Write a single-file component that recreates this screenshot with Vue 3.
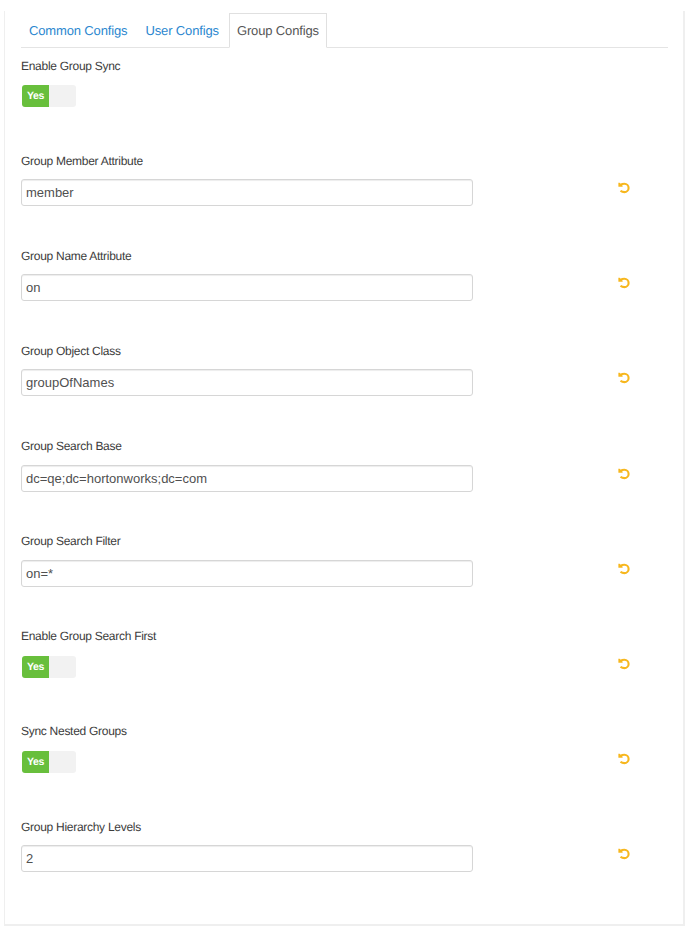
<script setup>
import { ref } from 'vue'

const tabs = ['Common Configs', 'User Configs', 'Group Configs']
const active = ref('Group Configs')

const fields = ref([
  { label: 'Enable Group Sync', type: 'toggle', undo: false },
  { label: 'Group Member Attribute', type: 'text', value: 'member', undo: true },
  { label: 'Group Name Attribute', type: 'text', value: 'on', undo: true },
  { label: 'Group Object Class', type: 'text', value: 'groupOfNames', undo: true },
  { label: 'Group Search Base', type: 'text', value: 'dc=qe;dc=hortonworks;dc=com', undo: true },
  { label: 'Group Search Filter', type: 'text', value: 'on=*', undo: true },
  { label: 'Enable Group Search First', type: 'toggle', undo: true },
  { label: 'Sync Nested Groups', type: 'toggle', undo: true },
  { label: 'Group Hierarchy Levels', type: 'text', value: '2', undo: true },
])
</script>

<template>
  <main class="page">
    <section class="panel">
      <nav class="tabs">
        <a v-for="t in tabs" :key="t" class="tab" :class="{ active: t === active }" @click="active = t">{{ t }}</a>
      </nav>
      <div v-for="f in fields" :key="f.label" class="field">
        <label class="label">{{ f.label }}</label>
        <div class="row">
          <input v-if="f.type === 'text'" v-model="f.value" class="input" type="text" />
          <div v-else class="toggle"><span class="on">Yes</span><span class="off"></span></div>
          <svg v-if="f.undo" class="undo" viewBox="0 0 12 12">
            <path class="arc" d="M2.6 2.9Q4.2 1.7 6.4 1.7A4.2 4.2 0 0 1 6.4 10.1Q4.200 10.100 2.500 8.700" />
            <path class="head" d="M0.4 0.8H1.6L4.6 3.8V4.8H0.4z" />
          </svg>
        </div>
      </div>
    </section>
  </main>
</template>

<style>
body {
  background: #fff;
}
</style>

<style scoped>
.page {
  box-sizing: border-box;
  width: 691px;
  height: 931px;
  padding: 11px 6px 0 4px;
  font-family: "Liberation Sans", Arial, sans-serif;
  text-rendering: geometricPrecision;
}
.panel {
  box-sizing: border-box;
  height: 915px;
  padding: 2px 15px 0 16px;
  border: 1px solid #efefef;
  border-width: 0 2px 2px 1px;
}
.tabs {
  display: flex;
  height: 34px;
  border-bottom: 1px solid #e4e4e4;
}
.tab {
  box-sizing: border-box;
  height: 35px;
  margin-right: 2px;
  padding: 0 7px;
  border: 1px solid transparent;
  font-size: 13px;
  line-height: 34px;
  letter-spacing: -0.14px;
  color: #2b87cf;
  white-space: nowrap;
}
.tab.active {
  border-color: #e0e0e0 #e0e0e0 #fff;
  background: #fff;
  color: #555;
}
.field {
  height: 95.15px;
}
.label {
  display: block;
  box-sizing: border-box;
  padding-top: 9.5px;
  height: 36px;
  font-size: 12px;
  line-height: 17px;
  letter-spacing: -0.28px;
  color: #3c3c3c;
}
.row {
  display: flex;
  width: 609px;
  justify-content: space-between;
}
.input {
  box-sizing: border-box;
  width: 452px;
  height: 27px;
  padding: 0 4px;
  border: 1px solid #d6d6d6;
  border-radius: 3px;
  box-shadow: inset 0 1px 1px rgba(0, 0, 0, 0.075);
  font-family: inherit;
  font-size: 13px;
  color: #505050;
  outline: none;
}
.toggle {
  display: flex;
  width: 54px;
  height: 22px;
  margin: 1px 0 0 1px;
  border-radius: 3px;
  overflow: hidden;
}
.on {
  width: 27px;
  background: #68bf3c;
  color: #fff;
  font-size: 10.5px;
  font-weight: 700;
  line-height: 22px;
  letter-spacing: -0.3px;
  text-align: center;
}
.off {
  flex: 1;
  background: #f2f2f2;
}
.undo {
  width: 12px;
  height: 12px;
  margin-top: 3px;
}
.arc {
  fill: none;
  stroke: #f7b71e;
  stroke-width: 2.1;
}
.head {
  fill: #f7b71e;
}
</style>
